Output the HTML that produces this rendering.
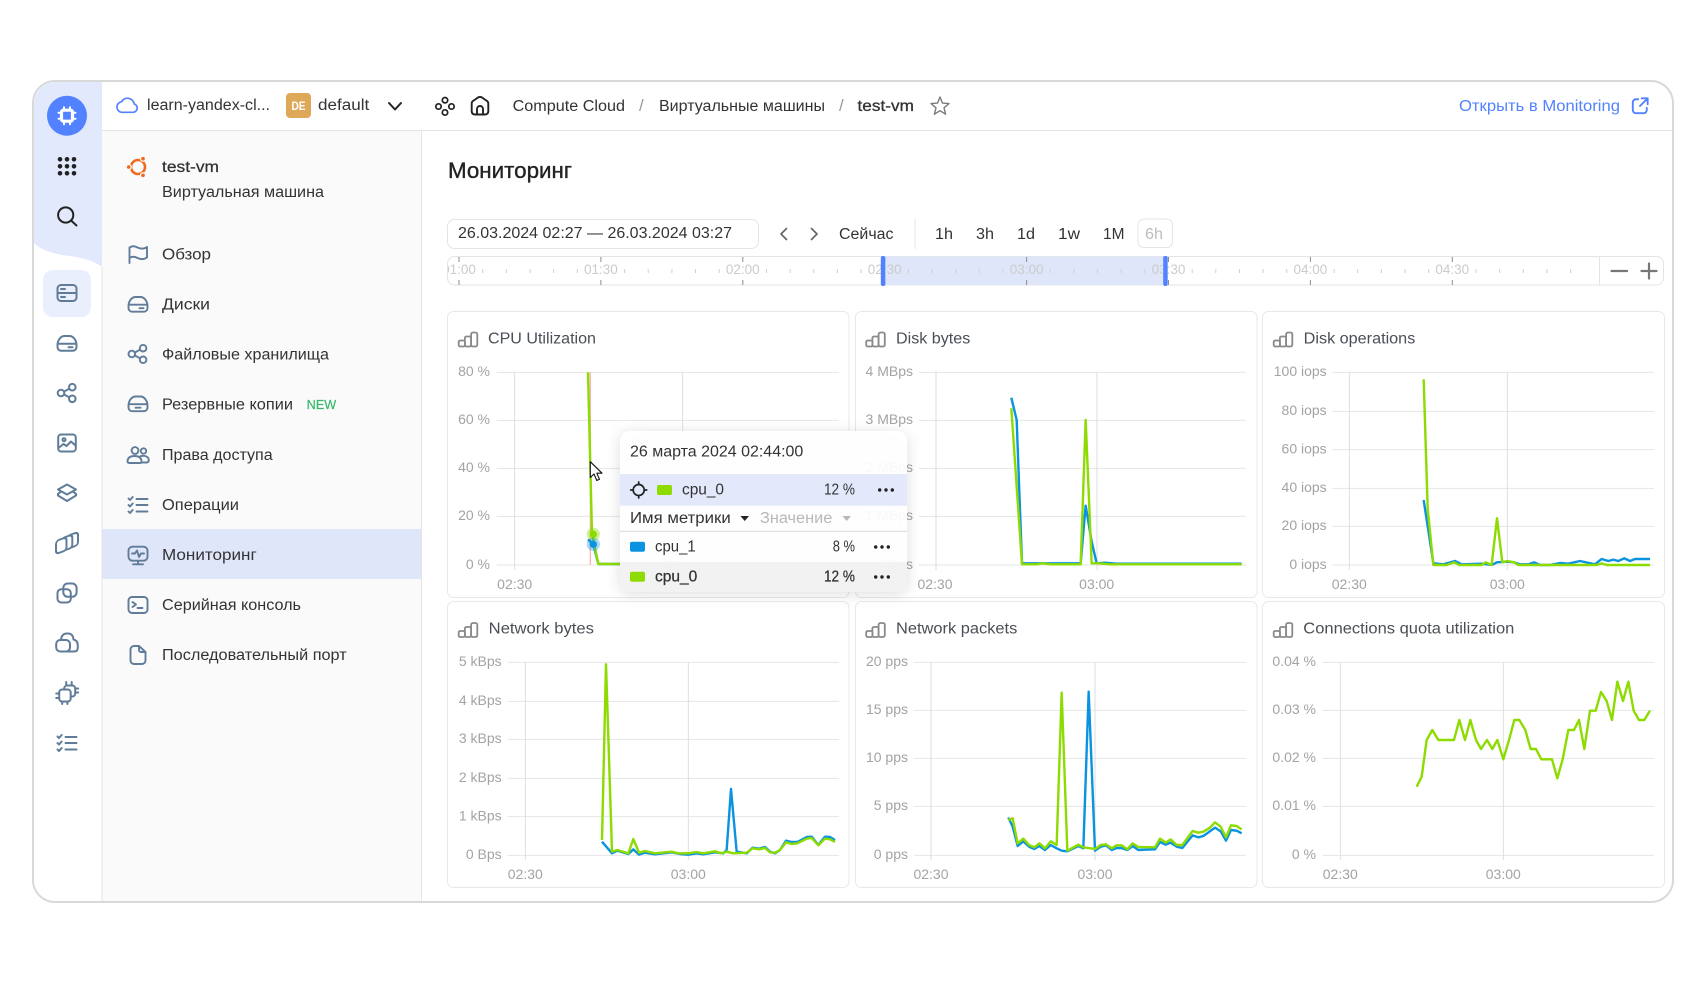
<!DOCTYPE html>
<html lang="ru"><head><meta charset="utf-8"><title>Мониторинг</title>
<style>
html,body{margin:0;padding:0;background:#fff;width:1706px;height:983px;overflow:hidden}
svg{display:block;position:absolute;left:0;top:0;filter:blur(.3px)}
text{font-family:"Liberation Sans","Noto Sans CJK SC",sans-serif;font-size:15.5px;fill:#333}
.ax{font-size:14px;fill:#a3a3a3}
.tl{font-size:13.5px;fill:#cbcbcb}
.ct{fill:#4a4f57}
.ic{fill:none;stroke:#607c99;stroke-width:2;stroke-linecap:round;stroke-linejoin:round}
.dk{fill:none;stroke:#222;stroke-width:1.7;stroke-linecap:round;stroke-linejoin:round}
.grid{stroke:#e6e6e6;stroke-width:3;fill:none}
.vg{stroke:#dedede;stroke-width:3;fill:none}
.g{fill:none;stroke:#8ddb00;stroke-width:7.2;stroke-linejoin:round}
.b{fill:none;stroke:#0a93e0;stroke-width:7.2;stroke-linejoin:round}
.card{fill:#fff;stroke:#e8e8e8;stroke-width:1}
.ci{fill:none;stroke:#8a8a8a;stroke-width:1.8;stroke-linejoin:round}
</style></head><body>
<svg width="1706" height="983" viewBox="0 0 1706 983" xmlns="http://www.w3.org/2000/svg">
<defs>
<filter id="sh" x="-20%" y="-20%" width="140%" height="140%"><feDropShadow dx="0" dy="2" stdDeviation="7" flood-color="#000" flood-opacity=".14"/></filter>
<clipPath id="tlc"><rect x="448" y="256" width="1151" height="29" rx="7"/></clipPath>
<clipPath id="ttc"><rect x="620" y="431" width="287" height="161" rx="10"/></clipPath>
<g id="i-disk"><path d="M-9.5 3.5V1.5C-9.500-3.500-6-7.500-2.500-7.500h5C6-7.500 9.500-3.500 9.500 1.500v2A3.700 3.700 0 0 1 5.800 7.200H-5.800A3.700 3.700 0 0 1-9.500 3.500ZM-9 .2H9M1.500 3.700H5.500"/></g>
<g id="i-back"><path d="M-9.5 3.5V1.500C-9.500-3.500-6-7.500-2.500-7.500h5C6-7.500 9.500-3.500 9.500 1.500v2A3.700 3.700 0 0 1 5.800 7.200H-5.800A3.700 3.700 0 0 1-9.500 3.500ZM-9 .2H9M-2.500 3.700H2.500"/></g>
<g id="i-share"><circle cx="-6" cy="0" r="3.300"/><circle cx="5.300" cy="-5.800" r="3.300"/><circle cx="5.300" cy="5.800" r="3.300"/><path d="M-3-1.500 2.300-4.300M-3 1.500 2.300 4.300"/></g>
<g id="i-check"><path d="M-9.5-6.500-8-5-5.300-8M-9.500 0-8 1.500-5.300-1.500M-9.500 6.500-8 8-5.300 5M-1.500-6H9.500M-1.500 0H9.500M-1.500 6.500H9.500"/></g>
<g id="ci"><rect x="-9.300" y="1" width="6.200" height="6" rx="1.500"/><rect x="-3.100" y="-3" width="6.200" height="10" rx="1.500"/><rect x="3.100" y="-7" width="6.200" height="14" rx="1.800"/></g>
<g id="dots"><circle cx="-6.300" r="1.700" fill="#222"/><circle r="1.700" fill="#222"/><circle cx="6.300" r="1.700" fill="#222"/></g>
</defs>

<!-- panels -->
<rect x="33" y="81" width="1640" height="821" rx="22" fill="#fff"/>
<path d="M102 82H56A22 22 0 0 0 34 104V243C40 250 53 253 62 255C80 257 93 260 102 267Z" fill="#e2e9fc"/>
<rect x="102" y="131" width="319.500" height="770" fill="#fafafa"/>
<rect x="102" y="529" width="319.500" height="50" fill="#e0e6f9"/>
<path d="M102 267V901M421.500 131V901M102 130.500H1672" stroke="#e4e4e4" fill="none"/>
<rect x="43" y="270" width="48" height="47" rx="10" fill="#e9effd"/>

<!-- rail -->
<circle cx="67" cy="115.700" r="20" fill="#5282ff"/>
<g transform="translate(67 115.700)" fill="none" stroke="#fff" stroke-linecap="round"><rect x="-5.500" y="-5.500" width="11" height="11" rx="2" stroke-width="3.200"/><path d="M-3-8.500V-7.500M3-8.500V-7.500M-3 7.500V8.500M3 7.500V8.500M-8.500-3H-7.500M-8.500 3H-7.500M7.500-3H8.500M7.500 3H8.500" stroke-width="2"/></g>
<g fill="#222"><circle cx="60" cy="159.300" r="2.300"/><circle cx="67" cy="159.300" r="2.300"/><circle cx="74" cy="159.300" r="2.300"/><circle cx="60" cy="166.300" r="2.300"/><circle cx="67" cy="166.300" r="2.300"/><circle cx="74" cy="166.300" r="2.300"/><circle cx="60" cy="173.300" r="2.300"/><circle cx="67" cy="173.300" r="2.300"/><circle cx="74" cy="173.300" r="2.300"/></g>
<circle cx="65.700" cy="215" r="7.600" fill="none" stroke="#222" stroke-width="2"/><path d="M71.300 220.700 76.500 225.500" stroke="#222" stroke-width="2" stroke-linecap="round"/>

<g class="ic">
<g transform="translate(67 293)"><rect x="-9.500" y="-8" width="19" height="16" rx="3.500"/><path d="M-9.500 0H9.500M-6-4H-2M-6 4H-2"/></g>
<use href="#i-disk" x="67" y="343.500"/>
<use href="#i-share" x="67" y="393"/>
<g transform="translate(67 443)"><rect x="-8.800" y="-8.500" width="17.600" height="17" rx="3"/><circle cx="-3" cy="-3.300" r="1.500"/><path d="M-8.500 5-3.500 1-.5 3 4-1.500 8.500 2.500"/></g>
<g transform="translate(67 493)"><path d="M0-8.500 9-3.500 0 1.500-9-3.500ZM-6-1.300-9 .8V2.500L0 8 9 2.500V.8L6-1.300"/></g>
<g transform="translate(67 543) skewY(-20)" fill="#fff"><rect x=".5" y="-7" width="10.500" height="13" rx="3"/><rect x="-5.200" y="-6.500" width="10.500" height="13" rx="3"/><rect x="-11" y="-6" width="10.500" height="13" rx="3"/></g>
<g transform="translate(67 593)"><rect x="-9.500" y="-3.800" width="13.300" height="13.300" rx="3.800"/><rect x="-3.700" y="-9.500" width="13.300" height="13.300" rx="4.500"/></g>
<g transform="translate(67 642.500)"><path d="M-6-2.500Q-5.500-9 0-9H1Q6-9 6.500-3 10.800-2 10.800 3V5Q10.800 9 7 9H-6"/><rect x="-10.800" y="-2.500" width="13.800" height="11.500" rx="4"/></g>
<g transform="translate(67.200 692.500)"><rect x="-8" y="-3" width="11.500" height="12" rx="3"/><path d="M-3-3V-4A3 3 0 0 1 0-7H5A3 3 0 0 1 8-4V1A3 3 0 0 1 5 4H3.500M-1-7V-10.500M4.500-7V-10.500M8-4H11M8 0H11M-8 1H-11M-8 5.500H-11M-5 9V11.500M.2 9V11.500"/></g>
<use href="#i-check" x="67" y="743"/>
</g>

<!-- sidebar icons -->
<g transform="translate(138 167)" fill="none"><circle r="7" stroke="#ee6a1f" stroke-width="2.600"/><g fill="#ee6a1f" stroke="#fafafa" stroke-width="1.300"><circle cx="-9.300" r="2.500"/><circle cx="5" cy="-8.300" r="2.500"/><circle cx="5" cy="8.300" r="2.500"/></g></g>
<g class="ic" style="stroke-width:1.900">
<path transform="translate(138 254)" d="M-8.500 9V-6.500C-5.500-8.500-3-8-.5-6.500 2.500-5 6-5 9-7V3.500C6 5.500 2.500 5.500-.5 4-3 2.500-5.500 2-8.500 4"/>
<use href="#i-disk" x="138" y="304.500"/>
<use href="#i-share" x="137.800" y="354"/>
<use href="#i-back" x="138" y="404"/>
<g transform="translate(138 455)"><circle cx="-3" cy="-4.500" r="3.400"/><circle cx="5.500" cy="-4" r="2.700"/><path d="M-3.500 1Q-10 1-10.500 6-10.500 8-8.500 8H2Q4 8 3.500 6 3 1-3.500 1ZM2.500 1.200Q5 .5 7 1 11 2 10.800 5.500 10.500 7.500 8.500 7.500H4"/></g>
<use href="#i-check" x="138" y="505"/>
<g transform="translate(138 555)"><rect x="-9.500" y="-8.300" width="19" height="14" rx="4"/><path d="M-6-1.500H-3L-1-4.500 1 2 3-1.500H6M0 6V9M-5 9.300H5"/></g>
<g transform="translate(138 605)"><rect x="-9.500" y="-8" width="19" height="16" rx="3.500"/><path d="M-5.500-3-2-.5-5.500 2M-.5 3H4.500"/></g>
<path transform="translate(138 655)" d="M1-9H-4A3.500 3.500 0 0 0-7.500-5.500V5.500A3.500 3.500 0 0 0-4 9H4A3.500 3.500 0 0 0 7.500 5.500V-3ZM1-9V-5A2 2 0 0 0 3-3H7.500"/>
</g>

<!-- sidebar text -->
<text x="162" y="172" textLength="57" lengthAdjust="spacingAndGlyphs" stroke="#333" stroke-width=".25">test-vm</text>
<text x="162" y="197" textLength="162" lengthAdjust="spacingAndGlyphs">Виртуальная машина</text>
<text x="162" y="259.500" textLength="49" lengthAdjust="spacingAndGlyphs">Обзор</text>
<text x="162" y="309.500" textLength="48" lengthAdjust="spacingAndGlyphs">Диски</text>
<text x="162" y="359.500" textLength="167" lengthAdjust="spacingAndGlyphs">Файловые хранилища</text>
<text x="162" y="409.500" textLength="131" lengthAdjust="spacingAndGlyphs">Резервные копии</text>
<text x="306.700" y="409" textLength="29.500" lengthAdjust="spacingAndGlyphs" style="font-size:12.500px;fill:#35b96b" stroke="#35b96b" stroke-width=".2">NEW</text>
<text x="162" y="460" textLength="110.700" lengthAdjust="spacingAndGlyphs">Права доступа</text>
<text x="162" y="510" textLength="77" lengthAdjust="spacingAndGlyphs">Операции</text>
<text x="162" y="560" textLength="94.700" lengthAdjust="spacingAndGlyphs">Мониторинг</text>
<text x="162" y="610" textLength="139" lengthAdjust="spacingAndGlyphs">Серийная консоль</text>
<text x="162" y="660" textLength="184.700" lengthAdjust="spacingAndGlyphs">Последовательный порт</text>

<!-- header -->
<path transform="translate(127 105.300)" d="M-5.500 7H6A4.300 4.300 0 0 0 7.200-1.400 6.800 6.800 0 0 0-5.500-3.500 5.300 5.300 0 0 0-5.500 7Z" fill="none" stroke="#5282ff" stroke-width="1.700" stroke-linejoin="round"/>
<text x="147" y="110" textLength="123" lengthAdjust="spacingAndGlyphs">learn-yandex-cl...</text>
<rect x="286" y="93" width="25" height="25" rx="4" fill="#dfa858"/>
<text x="291.500" y="110" textLength="14" lengthAdjust="spacingAndGlyphs" style="font-size:11.500px;fill:#fff;font-weight:bold">DE</text>
<text x="318" y="110" textLength="51.300" lengthAdjust="spacingAndGlyphs">default</text>
<path d="M389 103 395 109.500 401 103" class="dk" style="stroke-width:2"/>
<g class="dk" transform="translate(445 106)"><circle cy="-5.800" r="2.700"/><circle cx="-6.500" cy=".5" r="2.700"/><circle cx="6.500" cy=".5" r="2.700"/><circle cy="6.500" r="2.700"/></g>
<path class="dk" transform="translate(480 106)" d="M-8.300 5V-2.500Q-8.300-4-7-5L-2-8.500Q0-9.700 2-8.500L7-5Q8.300-4 8.300-2.500V5Q8.300 8.500 5 8.500H-5Q-8.300 8.500-8.300 5ZM-3 8.500V3A3 3 0 0 1 3 3V8.500" style="stroke-width:1.900"/>
<text x="512.600" y="111" textLength="112.400" lengthAdjust="spacingAndGlyphs">Compute Cloud</text>
<text x="639" y="111" style="fill:#999;font-size:17px">/</text>
<text x="659" y="111" textLength="166" lengthAdjust="spacingAndGlyphs">Виртуальные машины</text>
<text x="839" y="111" style="fill:#999;font-size:17px">/</text>
<text x="857.500" y="111" textLength="56.500" lengthAdjust="spacingAndGlyphs" stroke="#333" stroke-width=".3">test-vm</text>
<path transform="translate(940 106.500)" d="M0-9.500 2.500-3.400 9-2.900 4 1.300 5.600 7.700 0 4.200-5.600 7.700-4 1.300-9-2.900-2.500-3.400Z" fill="none" stroke="#7a7a7a" stroke-width="1.400" stroke-linejoin="round"/>
<text x="1459" y="111" textLength="161" lengthAdjust="spacingAndGlyphs" style="fill:#5282ff">Открыть в Monitoring</text>
<path transform="translate(1640 106) scale(.9)" d="M-2-7.500H-4.500A3.500 3.500 0 0 0-8-4V4.500A3.500 3.500 0 0 0-4.500 8H4A3.500 3.500 0 0 0 7.500 4.500V2M2-8.500H8.500V-2M8-8 0 0" fill="none" stroke="#5282ff" stroke-width="2.100" stroke-linecap="round" stroke-linejoin="round"/>

<!-- page title + toolbar -->
<text x="448" y="178" textLength="124" lengthAdjust="spacingAndGlyphs" style="font-size:21.800px;fill:#222" stroke="#222" stroke-width=".35">Мониторинг</text>
<rect x="447.500" y="219.500" width="311" height="29" rx="7" fill="#fff" stroke="#e4e4e4"/>
<text x="458" y="238" textLength="274" lengthAdjust="spacingAndGlyphs">26.03.2024 02:27 — 26.03.2024 03:27</text>
<path d="M786.500 228.500 781 234 786.500 239.500M811.500 228.500 817 234 811.500 239.500" fill="none" stroke="#666" stroke-width="1.700" stroke-linecap="round" stroke-linejoin="round"/>
<text x="839" y="239" textLength="54.500" lengthAdjust="spacingAndGlyphs">Сейчас</text>
<path d="M915 219V249" stroke="#e4e4e4"/>
<text x="935" y="239" textLength="18" lengthAdjust="spacingAndGlyphs">1h</text>
<text x="976" y="239" textLength="18" lengthAdjust="spacingAndGlyphs">3h</text>
<text x="1017" y="239" textLength="18" lengthAdjust="spacingAndGlyphs">1d</text>
<text x="1058" y="239" textLength="22" lengthAdjust="spacingAndGlyphs">1w</text>
<text x="1103" y="239" textLength="21.500" lengthAdjust="spacingAndGlyphs">1M</text>
<rect x="1138" y="219" width="34.500" height="28.500" rx="6" fill="#fff" stroke="#e4e4e4"/>
<text x="1145" y="239" textLength="18" lengthAdjust="spacingAndGlyphs" style="fill:#bdbdbd">6h</text>

<!-- timeline -->
<rect x="447.500" y="256.500" width="1216" height="28.500" rx="7" fill="#fff" stroke="#e4e4e4"/>
<path d="M1599.500 257V285" stroke="#e4e4e4"/>
<g clip-path="url(#tlc)">
<rect x="883" y="256.500" width="282" height="28.500" fill="#e0e6f9"/>
<path d="M482.700 269v4M506.300 269v4M530 269v4M553.600 269v4M577.300 269v4M624.600 269v4M648.200 269v4M671.900 269v4M695.500 269v4M719.200 269v4M766.500 269v4M790.100 269v4M813.800 269v4M837.400 269v4M861.100 269v4M908.400 269v4M932 269v4M955.700 269v4M979.300 269v4M1003 269v4M1050.300 269v4M1073.900 269v4M1097.600 269v4M1121.200 269v4M1144.900 269v4M1192.200 269v4M1215.800 269v4M1239.500 269v4M1263.100 269v4M1286.800 269v4M1334.100 269v4M1357.700 269v4M1381.400 269v4M1405 269v4M1428.700 269v4M1476 269v4M1499.600 269v4M1523.300 269v4M1546.900 269v4M1570.600 269v4" stroke="#cfcfcf" stroke-width="1"/>
<path d="M459 257v5M459 280v5M600.900 257v5M600.900 280v5M742.800 257v5M742.800 280v5M884.700 257v5M884.700 280v5M1026.600 257v5M1026.600 280v5M1168.500 257v5M1168.500 280v5M1310.400 257v5M1310.400 280v5M1452.300 257v5M1452.300 280v5" stroke="#8c8c8c" stroke-width="1"/>
<g class="tl" text-anchor="middle">
<text class="tl" x="459" y="274">01:00</text><text class="tl" x="600.900" y="274">01:30</text><text class="tl" x="742.800" y="274">02:00</text><text class="tl" x="884.700" y="274">02:30</text><text class="tl" x="1026.600" y="274">03:00</text><text class="tl" x="1168.500" y="274">03:30</text><text class="tl" x="1310.400" y="274">04:00</text><text class="tl" x="1452.300" y="274">04:30</text>
</g>
</g>
<rect x="880.800" y="256" width="4.500" height="30" rx="2" fill="#5282ff"/>
<rect x="1163.200" y="256" width="4.500" height="30" rx="2" fill="#5282ff"/>
<path d="M1611.500 271H1627M1641.500 271H1656.500M1649 263.500V278.500" stroke="#777" stroke-width="2.200" stroke-linecap="round"/>

<!-- cards -->
<rect class="card" x="447.500" y="311.500" width="401.500" height="286" rx="6"/>
<rect class="card" x="855.500" y="311.500" width="401.500" height="286" rx="6"/>
<rect class="card" x="1262.500" y="311.500" width="402" height="286" rx="6"/>
<rect class="card" x="447.500" y="601.500" width="401.500" height="286" rx="6"/>
<rect class="card" x="855.500" y="601.500" width="401.500" height="286" rx="6"/>
<rect class="card" x="1262.500" y="601.500" width="402" height="286" rx="6"/>

<use href="#ci" class="ci" x="468" y="339.500"/><use href="#ci" class="ci" x="875.500" y="339.500"/><use href="#ci" class="ci" x="1283" y="339.500"/>
<use href="#ci" class="ci" x="468" y="630"/><use href="#ci" class="ci" x="875.500" y="630"/><use href="#ci" class="ci" x="1283" y="630"/>

<text class="ct" x="488" y="343.500" textLength="108" lengthAdjust="spacingAndGlyphs">CPU Utilization</text>
<text class="ct" x="896" y="343.500" textLength="74.300" lengthAdjust="spacingAndGlyphs">Disk bytes</text>
<text class="ct" x="1303.700" y="343.500" textLength="111.600" lengthAdjust="spacingAndGlyphs">Disk operations</text>
<text class="ct" x="488.700" y="633.500" textLength="105.300" lengthAdjust="spacingAndGlyphs">Network bytes</text>
<text class="ct" x="896" y="633.500" textLength="121.300" lengthAdjust="spacingAndGlyphs">Network packets</text>
<text class="ct" x="1303.300" y="633.500" textLength="211" lengthAdjust="spacingAndGlyphs">Connections quota utilization</text>

<!-- chart 1 -->
<g transform="translate(440 305) scale(.33333)">
<path class="grid" d="M170 202H1196M170 346H1196M170 490H1196M170 634H1196M170 780H1196"/>
<path class="vg" d="M224 202V795M728 202V795"/>
<path d="M451 202V780" stroke="#ffb4b4" stroke-width="4" fill="none"/>
<polyline class="b" points="444 703 460 718 475 777 1180 777"/>
<polyline class="g" points="444 202 456 687 475 777 660 777 690 770 720 777 1180 775"/>
<circle cx="460" cy="688" r="20" fill="#8ddb00" opacity=".4"/><circle cx="460" cy="688" r="11" fill="#8ddb00"/>
<circle cx="460" cy="718" r="20" fill="#0a93e0" opacity=".35"/><circle cx="460" cy="718" r="11" fill="#0a93e0"/>
</g>
<g text-anchor="end"><text class="ax" x="490" y="376">80 %</text><text class="ax" x="490" y="424">60 %</text><text class="ax" x="490" y="472">40 %</text><text class="ax" x="490" y="520">20 %</text><text class="ax" x="490" y="569">0 %</text></g>
<g text-anchor="middle"><text class="ax" x="514.700" y="589">02:30</text><text class="ax" x="682.700" y="589">03:00</text></g>

<!-- chart 2 -->
<g transform="translate(850 305) scale(.33333)">
<path class="grid" d="M207 202H1188M207 346H1188M207 490H1188M207 634H1188M207 780H1188"/>
<path class="vg" d="M258 202V795M741 202V795"/>
<polyline class="b" points="484 278 500 345 516 775 692 775 707 602 725 710 740 775 765 773 800 776 1175 776"/>
<polyline class="g" points="484 310 516 778 560 778 578 775 600 778 692 778 707 345 725 775 745 775 780 778 1175 778"/>
</g>
<g text-anchor="end"><text class="ax" x="913" y="376">4 MBps</text><text class="ax" x="913" y="424">3 MBps</text><text class="ax" x="913" y="472">2 MBps</text><text class="ax" x="913" y="520">1 MBps</text><text class="ax" x="913" y="569">0 Bps</text></g>
<g text-anchor="middle"><text class="ax" x="935" y="589">02:30</text><text class="ax" x="1096.700" y="589">03:00</text></g>

<!-- chart 3 -->
<g transform="translate(1260 305) scale(.33333)">
<path class="grid" d="M217 202H1182M217 319H1182M217 434H1182M217 550H1182M217 664H1182M217 780H1182"/>
<path class="vg" d="M268 202V795M742 202V795"/>
<polyline class="b" points="491 585 520 775 550 778 585 768 605 778 665 776 695 780 711 772 742 770 762 772 780 778 805 778 822 772 840 780 870 780 900 774 925 776 960 768 1005 778 1025 762 1045 768 1060 764 1075 768 1093 760 1110 768 1125 762 1170 762"/>
<polyline class="g" points="491 223 503 610 520 780 560 780 582 772 597 780 665 780 677 772 695 780 711 640 727 772 742 768 762 772 775 780 1010 780 1025 775 1040 780 1170 780"/>
</g>
<g text-anchor="end"><text class="ax" x="1326.700" y="376">100 iops</text><text class="ax" x="1326.700" y="415">80 iops</text><text class="ax" x="1326.700" y="453.500">60 iops</text><text class="ax" x="1326.700" y="492">40 iops</text><text class="ax" x="1326.700" y="530">20 iops</text><text class="ax" x="1326.700" y="569">0 iops</text></g>
<g text-anchor="middle"><text class="ax" x="1349.300" y="589">02:30</text><text class="ax" x="1507.300" y="589">03:00</text></g>

<!-- chart 4 -->
<g transform="translate(440 600) scale(.33333)">
<path class="grid" d="M203 187H1197M203 304H1197M203 418H1197M203 535H1197M203 650H1197M203 766H1197"/>
<path class="vg" d="M256 187V780M745 187V780"/>
<polyline class="b" points="486 725 516 760 532 752 565 762 580 748 597 764 615 758 645 763 695 757 720 762 745 764 770 760 790 763 825 757 850 760 860 750 873 567 890 755 920 760 938 743 958 746 975 741 990 755 1005 760 1020 750 1038 722 1055 726 1072 726 1100 711 1115 710 1135 735 1155 710 1170 711 1185 720"/>
<polyline class="g" points="486 720 498 193 516 755 532 750 565 760 580 717 597 758 615 753 645 760 695 755 715 760 745 760 770 756 790 760 825 754 845 760 860 755 880 760 920 758 938 745 958 748 975 744 990 757 1005 758 1020 750 1038 727 1055 732 1072 730 1100 716 1115 714 1135 736 1155 716 1170 718 1185 726"/>
</g>
<g text-anchor="end"><text class="ax" x="501.700" y="666">5 kBps</text><text class="ax" x="501.700" y="705">4 kBps</text><text class="ax" x="501.700" y="743">3 kBps</text><text class="ax" x="501.700" y="782">2 kBps</text><text class="ax" x="501.700" y="820.500">1 kBps</text><text class="ax" x="501.700" y="859">0 Bps</text></g>
<g text-anchor="middle"><text class="ax" x="525.300" y="879">02:30</text><text class="ax" x="688.300" y="879">03:00</text></g>

<!-- chart 5 -->
<g transform="translate(850 600) scale(.33333)">
<path class="grid" d="M192 187H1188M192 331H1188M192 475H1188M192 619H1188M192 766H1188"/>
<path class="vg" d="M243 187V780M735 187V780"/>
<polyline class="b" points="475 653 488 680 503 738 520 724 537 740 553 747 568 738 585 750 602 735 620 745 635 752 652 754 685 738 700 745 716 275 735 752 752 740 768 736 785 750 800 744 815 744 832 750 848 738 865 750 915 748 930 726 947 734 962 728 980 740 997 744 1028 706 1045 712 1060 708 1095 683 1112 694 1128 722 1143 690 1160 692 1175 700"/>
<polyline class="g" points="475 660 488 655 503 730 520 716 537 735 553 742 568 730 585 745 602 724 620 735 635 278 652 752 685 734 700 742 735 747 752 735 768 733 785 745 800 736 815 736 832 748 848 730 865 741 915 742 930 716 947 728 962 718 980 735 997 735 1028 693 1045 698 1060 695 1080 683 1095 667 1112 680 1128 712 1143 676 1160 678 1175 688"/>
</g>
<g text-anchor="end"><text class="ax" x="908" y="666">20 pps</text><text class="ax" x="908" y="714">15 pps</text><text class="ax" x="908" y="762">10 pps</text><text class="ax" x="908" y="810">5 pps</text><text class="ax" x="908" y="859">0 pps</text></g>
<g text-anchor="middle"><text class="ax" x="931" y="879">02:30</text><text class="ax" x="1095" y="879">03:00</text></g>

<!-- chart 6 -->
<g transform="translate(1260 600) scale(.33333)">
<path class="grid" d="M188 187H1182M188 331H1182M188 475H1182M188 619H1182M188 766H1182"/>
<path class="vg" d="M241 187V780M730 187V780"/>
<polyline class="g" points="470 560 485 530 500 420 517 390 535 420 582 420 598 360 615 420 631 360 648 420 663 447 681 420 697 447 712 420 730 478 747 420 763 360 778 360 796 390 812 447 828 447 844 478 876 478 892 535 908 478 925 390 942 390 957 360 973 447 990 332 1007 332 1023 276 1040 303 1056 360 1072 245 1089 303 1105 245 1121 332 1137 360 1153 360 1170 332"/>
</g>
<g text-anchor="end"><text class="ax" x="1316" y="666">0.04 %</text><text class="ax" x="1316" y="714">0.03 %</text><text class="ax" x="1316" y="762">0.02 %</text><text class="ax" x="1316" y="810">0.01 %</text><text class="ax" x="1316" y="859">0 %</text></g>
<g text-anchor="middle"><text class="ax" x="1340.300" y="879">02:30</text><text class="ax" x="1503.300" y="879">03:00</text></g>

<!-- cursor -->
<path d="M590.300 461.700V477.500L594 474 596.800 480.500 599.500 479.300 596.800 473.200H602Z" fill="#fff" stroke="#111" stroke-width="1.100" stroke-linejoin="round"/>

<!-- tooltip -->
<rect x="620" y="431" width="287" height="161" rx="10" fill="#fff" fill-opacity=".93" filter="url(#sh)"/>
<g clip-path="url(#ttc)">
<rect x="620" y="474" width="287" height="31.700" fill="#e3e9fb"/>
<rect x="620" y="562" width="287" height="30" fill="#f1f1f1" fill-opacity=".95"/>
</g>
<path d="M620 531.300H907" stroke="#d9d9d9"/>
<text x="630" y="456.500" textLength="173.300" lengthAdjust="spacingAndGlyphs">26 марта 2024 02:44:00</text>
<g class="dk" transform="translate(638.700 490)"><circle r="5.500"/><path d="M0-8V-5.500M0 5.500V8M-8 0H-5.500M5.500 0H8"/></g>
<rect x="657" y="485" width="15" height="10" rx="2" fill="#8ddb00"/>
<text x="682" y="494.500" textLength="42" lengthAdjust="spacingAndGlyphs">cpu_0</text>
<text x="824" y="494.500" textLength="31" lengthAdjust="spacingAndGlyphs">12 %</text>
<use href="#dots" x="886" y="490"/>
<text x="630" y="522.800" textLength="100.700" lengthAdjust="spacingAndGlyphs">Имя метрики</text>
<path d="M740.500 516H749L744.700 521Z" fill="#222"/>
<text x="760" y="522.800" textLength="72.300" lengthAdjust="spacingAndGlyphs" style="fill:#b8b8b8">Значение</text>
<path d="M842.500 516H851L846.700 521Z" fill="#b8b8b8"/>
<rect x="630" y="541.700" width="15" height="10" rx="2" fill="#0a93e0"/>
<text x="655" y="551.500" textLength="40.700" lengthAdjust="spacingAndGlyphs">cpu_1</text>
<text x="832.700" y="551.500" textLength="22.300" lengthAdjust="spacingAndGlyphs">8 %</text>
<use href="#dots" x="882" y="547"/>
<rect x="630" y="571.700" width="15" height="10" rx="2" fill="#8ddb00"/>
<text x="655" y="581.500" textLength="42.300" lengthAdjust="spacingAndGlyphs" stroke="#333" stroke-width=".25">cpu_0</text>
<text x="824" y="581.500" textLength="31" lengthAdjust="spacingAndGlyphs" stroke="#333" stroke-width=".25">12 %</text>
<use href="#dots" x="882" y="577"/>

<!-- frame -->
<rect x="33" y="81" width="1640" height="821" rx="22" fill="none" stroke="#d9d9d9" stroke-width="2"/>
</svg>
</body></html>
